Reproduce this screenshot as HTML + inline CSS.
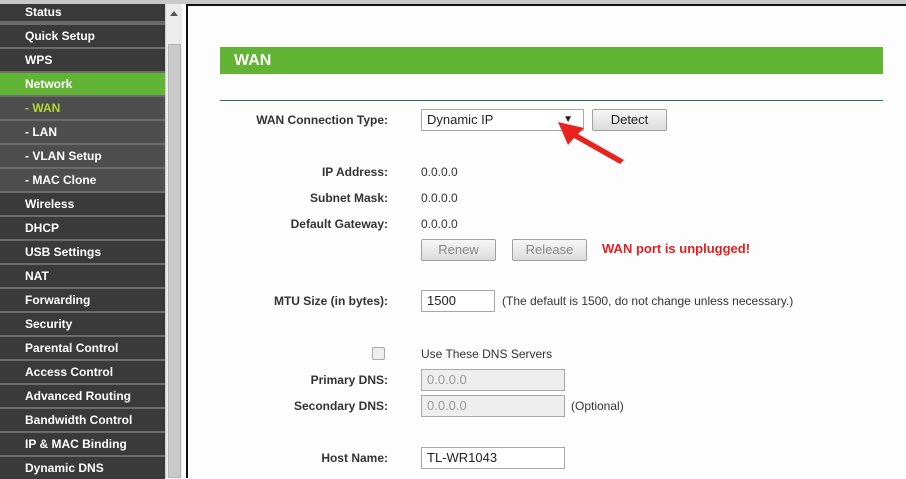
<!DOCTYPE html>
<html><head><style>
body{margin:0;width:906px;height:478px;overflow:hidden;background:#fdfdfd;font-family:"Liberation Sans",Arial,sans-serif;position:relative}
.sb{position:absolute;left:0;top:0;width:165px;height:478px;background:#6b6b6b}
.it{position:absolute;left:0;width:165px;height:22px;background:#3a3a3a;color:#fff;font-weight:bold;font-size:12px;line-height:22px;padding-left:25px;box-sizing:border-box}
.sub{background:#4e4e4e}
.act{background:#62b534}
.wan{color:#b5d334}
.scr{position:absolute;left:165px;top:0;width:17px;height:478px;background:#ececec;border-left:1px solid #d0d0d0;box-sizing:border-box}
.thumb{position:absolute;left:2px;top:44px;width:13px;height:434px;background:#c9c9c9;border:1px solid #b4b4b4;box-sizing:border-box}
.bd{position:absolute;left:186px;top:4px;width:2px;height:474px;background:#111}
.top{position:absolute;left:0;top:0;width:906px;height:4px;background:#c8c8c8}
.lbl{position:absolute;right:518px;font-size:12px;font-weight:bold;color:#333;text-align:right;white-space:nowrap}
.t{position:absolute;font-size:12px;color:#333;white-space:nowrap}
.box{position:absolute;border:1px solid #a8a8a8;box-sizing:border-box;font-size:13px;color:#222;padding-left:5px;line-height:20px;background:#fff}
.btn{position:absolute;border:1px solid #a0a0a0;border-radius:2px;background:linear-gradient(#f6f6f6,#dcdcdc);box-sizing:border-box;font-size:13px;text-align:center;line-height:19px;color:#222}
</style></head><body>
<div class="sb">
<div class="it" style="top:0;height:21px;line-height:24px">Status</div>
<div class="it" style="top:25px">Quick Setup</div>
<div class="it" style="top:49px">WPS</div>
<div class="it act" style="top:73px">Network</div>
<div class="it sub wan" style="top:97px">- WAN</div>
<div class="it sub" style="top:121px">- LAN</div>
<div class="it sub" style="top:145px">- VLAN Setup</div>
<div class="it sub" style="top:169px">- MAC Clone</div>
<div class="it" style="top:193px">Wireless</div>
<div class="it" style="top:217px">DHCP</div>
<div class="it" style="top:241px">USB Settings</div>
<div class="it" style="top:265px">NAT</div>
<div class="it" style="top:289px">Forwarding</div>
<div class="it" style="top:313px">Security</div>
<div class="it" style="top:337px">Parental Control</div>
<div class="it" style="top:361px">Access Control</div>
<div class="it" style="top:385px">Advanced Routing</div>
<div class="it" style="top:409px">Bandwidth Control</div>
<div class="it" style="top:433px">IP &amp; MAC Binding</div>
<div class="it" style="top:457px">Dynamic DNS</div>
</div>
<div class="scr"><div style="position:absolute;left:4px;top:11px;width:0;height:0;border-left:4px solid transparent;border-right:4px solid transparent;border-bottom:5px solid #555"></div><div class="thumb"></div></div>
<div class="bd"></div>
<div class="top"></div>
<div style="position:absolute;left:188px;top:4px;width:718px;height:2px;background:#111"></div>
<div style="position:absolute;left:220px;top:47px;width:663px;height:27px;background:#62b534;color:#fff;font-weight:bold;font-size:16px;line-height:27px;padding-left:14px;box-sizing:border-box">WAN</div>
<div style="position:absolute;left:220px;top:100px;width:663px;height:1px;background:#1f7a4a"></div>
<div class="lbl" style="top:113px">WAN Connection Type:</div>
<div class="box" style="left:421px;top:109px;width:163px;height:22px">Dynamic IP<span style="position:absolute;right:10px;font-size:10px">▼</span></div>
<div class="btn" style="left:592px;top:109px;width:75px;height:22px">Detect</div>
<svg style="position:absolute;left:556px;top:118px" width="75" height="48"><path d="M2 4 L28 10 L22 16 L68 42 L64 46 L18 20 L12 27 Z" fill="#e8231f"/></svg>
<div class="lbl" style="top:165px">IP Address:</div><div class="t" style="left:421px;top:165px">0.0.0.0</div>
<div class="lbl" style="top:191px">Subnet Mask:</div><div class="t" style="left:421px;top:191px">0.0.0.0</div>
<div class="lbl" style="top:217px">Default Gateway:</div><div class="t" style="left:421px;top:217px">0.0.0.0</div>
<div class="btn" style="left:421px;top:239px;width:75px;height:22px;color:#888">Renew</div>
<div class="btn" style="left:512px;top:239px;width:75px;height:22px;color:#888">Release</div>
<div class="t" style="left:602px;top:241px;color:#e02020;font-weight:bold;font-size:13px">WAN port is unplugged!</div>
<div class="lbl" style="top:294px">MTU Size (in bytes):</div>
<div class="box" style="left:421px;top:290px;width:74px;height:22px">1500</div>
<div class="t" style="left:502px;top:294px">(The default is 1500, do not change unless necessary.)</div>
<div style="position:absolute;left:372px;top:347px;width:11px;height:11px;border:1px solid #aaa;border-radius:2px;background:#eee"></div>
<div class="t" style="left:421px;top:347px">Use These DNS Servers</div>
<div class="lbl" style="top:373px">Primary DNS:</div>
<div class="box" style="left:421px;top:369px;width:144px;height:22px;background:#eee;color:#999">0.0.0.0</div>
<div class="lbl" style="top:399px">Secondary DNS:</div>
<div class="box" style="left:421px;top:395px;width:144px;height:22px;background:#eee;color:#999">0.0.0.0</div>
<div class="t" style="left:571px;top:399px">(Optional)</div>
<div class="lbl" style="top:451px">Host Name:</div>
<div class="box" style="left:421px;top:447px;width:144px;height:22px">TL-WR1043</div>
</body></html>
